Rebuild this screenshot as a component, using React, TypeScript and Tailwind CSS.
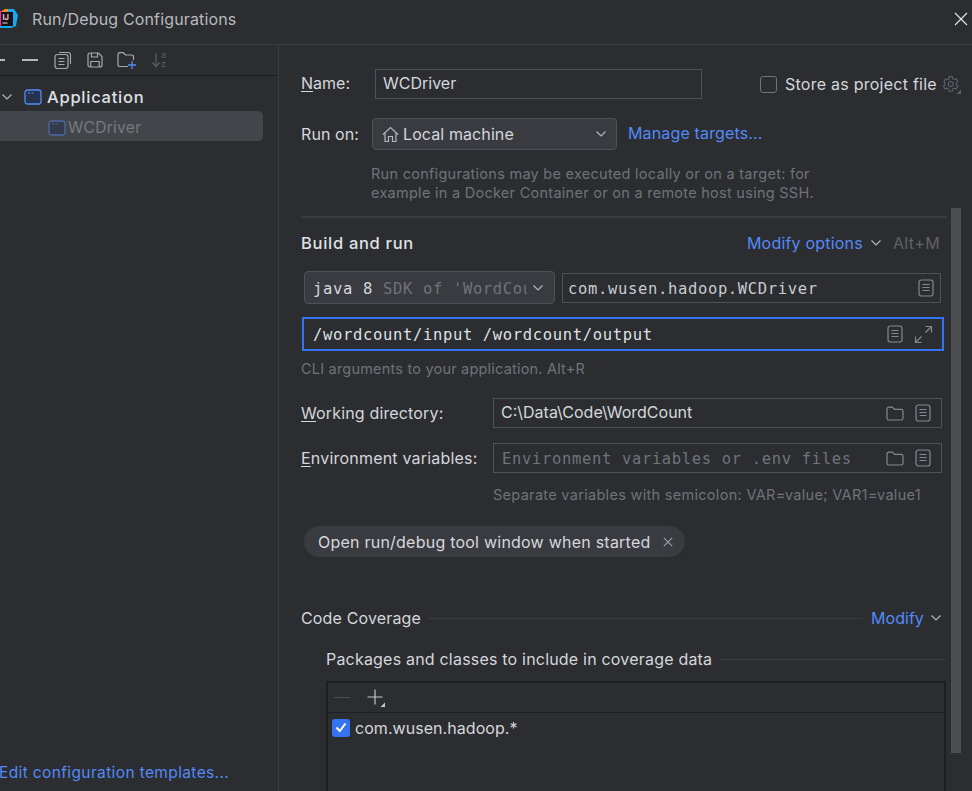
import React from "react";

const Chevron = ({ className = "" }: { className?: string }) => (
  <svg width="12" height="8" viewBox="0 0 12 8" fill="none" className={className}>
    <path d="M1.5 1.5 6 6l4.5-4.5" stroke="#b4b6bb" strokeWidth="1.2" />
  </svg>
);
const Doc = () => (
  <svg width="16" height="18" viewBox="0 0 16 18" fill="none">
    <rect x="1" y="1" width="14" height="16" rx="2.5" stroke="#85888e" strokeWidth="1.2" />
    <path d="M4.5 5.5h7M4.5 8.5h7M4.5 11.5h7" stroke="#85888e" strokeWidth="1.2" />
  </svg>
);
const Folder = () => (
  <svg width="18" height="15" viewBox="0 0 18 15" fill="none">
    <path d="M1 3a1.8 1.8 0 0 1 1.8-1.8h3.6L8.6 3.4h6.6A1.8 1.8 0 0 1 17 5.2v7A1.8 1.8 0 0 1 15.2 14H2.8A1.8 1.8 0 0 1 1 12.2z" stroke="#85888e" strokeWidth="1.2" />
  </svg>
);
const AppIcon = ({ dim = false }: { dim?: boolean }) => (
  <svg width="18" height="16" viewBox="0 0 18 16" fill="none" className={dim ? "opacity-50" : ""}>
    <rect x="1" y="1" width="16" height="14" rx="2.5" fill="#25324d" stroke="#548af7" strokeWidth="1.3" />
    <path d="M4 4h2M7.5 4h2" stroke="#548af7" strokeWidth="1.2" />
  </svg>
);

const Underlined = ({ first, rest }: { first: string; rest: string }) => (
  <span>
    <span className="underline underline-offset-2">{first}</span>
    {rest}
  </span>
);

export default function App() {
  return (
    <div className="flex h-[791px] w-[972px] flex-col overflow-hidden bg-[#2b2d30] font-['Inter',sans-serif] text-[16px] text-[#d5d7dc]">
      {/* Title bar */}
      <div className="flex h-[45px] shrink-0 items-center border-b border-[#393b40] pb-[7px]">
        <svg width="18" height="20" viewBox="0 0 18 20">
          <path d="M0 3 5 0h4l-1 4H0z" fill="#ff8a1f" />
          <path d="M0 2h2v15H0z" fill="#fc2f8e" />
          <path d="M8 0h6l4 6-2 11-5 2H0v-2h13V3H8z" fill="#16a9ee" />
          <rect x="1" y="3" width="12" height="14" fill="#17131a" />
          <rect x="2.5" y="13.5" width="5" height="1" fill="#e8e8e8" />
          <text x="2.5" y="10.5" fontSize="7.5" fontWeight="700" fill="#f6c9d0" fontFamily="Inter">IJ</text>
        </svg>
        <span className="ml-[14px] text-[16px] tracking-[0.15px] text-[#b8babf]">Run/Debug Configurations</span>
        <svg width="14" height="14" viewBox="0 0 14 14" className="ml-auto mr-[4px]">
          <path d="M1 1l12 12M13 1 1 13" stroke="#e8e9ec" strokeWidth="1.1" />
        </svg>
      </div>

      <div className="flex min-h-0 flex-1">
        {/* Left panel */}
        <div className="flex w-[279px] shrink-0 flex-col border-r border-r-[#393b40]">
          <div className="flex h-[31px] shrink-0 items-center border-b border-[#1e1f22]">
            <div className="h-[1.5px] w-[5px] bg-[#b4b6bb]" />
            <div className="ml-[17px] h-[1.5px] w-[16px] bg-[#b4b6bb]" />
            <svg width="18" height="18" viewBox="0 0 18 18" fill="none" className="ml-[16px]">
              <path d="M5 1.5h9a2.5 2.5 0 0 1 2.5 2.5v9" stroke="#a8aab0" strokeWidth="1.1" />
              <rect x="1" y="3.5" width="13" height="14" rx="2.5" stroke="#a8aab0" strokeWidth="1.2" />
              <path d="M4.5 7.5h6M4.5 10.5h6M4.5 13.5h6" stroke="#a8aab0" strokeWidth="1.1" />
            </svg>
            <svg width="16" height="16" viewBox="0 0 16 16" fill="none" className="ml-[15px]">
              <path d="M1 3a2 2 0 0 1 2-2h8.5L15 4.5V13a2 2 0 0 1-2 2H3a2 2 0 0 1-2-2z" stroke="#a8aab0" strokeWidth="1.2" />
              <path d="M4.5 1v4h6V1M3.8 15V9.5h8.4V15" stroke="#a8aab0" strokeWidth="1.2" />
            </svg>
            <svg width="20" height="18" viewBox="0 0 20 18" fill="none" className="ml-[14px]">
              <path d="M11 15.5H2.8A1.8 1.8 0 0 1 1 13.7V3.5a1.8 1.8 0 0 1 1.8-1.8h3.4L8.6 4h6.1a1.8 1.8 0 0 1 1.8 1.8V9" stroke="#a8aab0" strokeWidth="1.2" />
              <path d="M15 10v8M11 14h8" stroke="#548af7" strokeWidth="1.3" />
            </svg>
            <svg width="18" height="18" viewBox="0 0 18 18" fill="none" className="ml-[14px] overflow-visible">
              <path d="M5 2v13.5M1.5 11.5 5 15.5l3.5-4" stroke="#5a5d63" strokeWidth="1.2" />
              <text x="10" y="7" fontSize="9" fill="#5a5d63" fontFamily="Inter">a</text>
              <text x="10" y="16" fontSize="9" fill="#5a5d63" fontFamily="Inter">z</text>
            </svg>
          </div>
          <div className="flex h-[35px] shrink-0 items-center pt-[7px]">
            <Chevron className="ml-[1px]" />
            <div className="ml-[11px]"><AppIcon /></div>
            <span className="ml-[5px] text-[16.5px] font-medium tracking-[0.75px] text-[#dfe1e5]">Application</span>
          </div>
          <div className="flex h-[30px] w-[263px] shrink-0 items-center rounded-r-[5px] bg-[#43454a] pt-[3px]">
            <div className="ml-[48px]"><AppIcon dim /></div>
            <span className="ml-[2px] text-[15.5px] tracking-[0.3px] text-[#777a80]">WCDriver</span>
          </div>
          <div className="mt-auto pb-[7px] text-[15.5px] tracking-[0.37px] text-[#548af7]">
            <div className="ml-[-1px]">Edit configuration templates...</div>
          </div>
        </div>

        {/* Right panel */}
        <div className="relative min-w-0 flex-1 pl-[22px]">
          <div className="mt-[24px] flex h-[30px] items-center">
            <span className="w-[74px] pb-[2px]"><Underlined first="N" rest="ame:" /></span>
            <div className="flex h-[30px] w-[327px] items-center border border-[#4e5157] pb-[2px] pl-[7px] text-[16px]">WCDriver</div>
            <div className="ml-[58px] h-[17px] w-[17px] rounded-[3px] border-[1.5px] border-[#6f737a]" />
            <span className="ml-[8px] tracking-[0.25px]">Store as project file</span>
            <svg width="19" height="19" viewBox="0 0 19 19" fill="none" className="ml-[5px]">
              <path d="M7.2 1.5h3l.5 2.1 1.7.9 2-.7 1.5 2.6-1.5 1.5v1.9l1.5 1.4-1.5 2.6-2-.6-1.7.9-.5 2.1h-3l-.5-2.1-1.7-.9-2 .6-1.5-2.6 1.5-1.4V7.9L2 6.4l1.5-2.6 2 .7 1.7-.9z" stroke="#5f6268" strokeWidth="1.1" />
              <circle cx="8.7" cy="8.9" r="2.4" stroke="#5f6268" strokeWidth="1.1" />
              <path d="M19 14.5V19h-4.5z" fill="#5f6268" />
            </svg>
          </div>

          <div className="mt-[19px] flex h-[32px] items-center">
            <span className="w-[71px] tracking-[0.1px]">Run on:</span>
            <div className="flex h-[32px] w-[245px] items-center rounded-[4px] border border-[#4e5157] bg-[#393b40] pl-[9px]">
              <svg width="17" height="17" viewBox="0 0 17 17" fill="none">
                <path d="M1 8.5 8.5 1.5 16 8.5M3 7v8.5h3.5V10.5h4v5H14V7" stroke="#b4b6bb" strokeWidth="1.2" />
              </svg>
              <span className="ml-[4px] tracking-[0.1px]">Local machine</span>
              <Chevron className="ml-auto mr-[9px]" />
            </div>
            <span className="ml-[11px] pb-[2px] tracking-[0.15px] text-[#548af7]">Manage targets...</span>
          </div>

          <div className="ml-[70px] mt-[14px] text-[14.5px] leading-[19px] tracking-[0.27px] text-[#6f737a]">
            <div>Run configurations may be executed locally or on a target: for</div>
            <div>example in a Docker Container or on a remote host using SSH.</div>
          </div>

          <div className="mr-[25px] mt-[14px] h-[2px] bg-[#393b40]" />

          <div className="mt-[15px] flex h-[20px] items-center pr-[32px]">
            <span className="text-[16.5px] font-medium tracking-[0.7px] text-[#dfe1e5]">Build and run</span>
            <span className="ml-auto tracking-[0.2px] text-[#548af7]">Modify options</span>
            <Chevron className="ml-[7px]" />
            <span className="ml-[11px] tracking-[0.4px] text-[#5f6268]">Alt+M</span>
          </div>

          <div className="ml-[3px] mt-[18px] flex h-[33px] items-center font-['DejaVu_Sans_Mono',monospace] text-[15.5px]">
            <div className="flex h-[33px] w-[251px] items-center overflow-hidden rounded-[4px] border border-[#4e5157] bg-[#393b40] pl-[8px]">
              <span className="w-[214px] overflow-hidden whitespace-nowrap pt-[4px] tracking-[0.66px]">java 8 <span className="text-[#6f737a]">SDK of 'WordCount'</span></span>
              <Chevron className="ml-[5px]" />
            </div>
            <div className="ml-[7px] flex h-[30px] w-[379px] items-center border border-[#4e5157] pl-[5px] pr-[6px] tracking-[0.66px] text-[#c9cbd0]">
              <span className="pt-[4px]">com.wusen.hadoop.WCDriver</span>
              <span className="ml-auto font-sans"><Doc /></span>
            </div>
          </div>

          <div className="ml-[1px] mt-[13px] flex h-[34px] w-[642px] items-center border-2 border-[#3574f0] pl-[9px] pr-[9px] font-['DejaVu_Sans_Mono',monospace] text-[15.5px] tracking-[0.66px] text-[#dfe1e5]">
            <span className="pt-[3px]">/wordcount/input /wordcount/output</span>
            <span className="ml-auto"><Doc /></span>
            <svg width="19" height="19" viewBox="0 0 19 19" fill="none" className="ml-[11px]">
              <path d="M11.5 1.5h6v6M17.5 1.5l-6 6M7.5 17.5h-6v-6M1.5 17.5l6-6" stroke="#85888e" strokeWidth="1.2" />
            </svg>
          </div>

          <div className="mt-[9px] h-[18px] text-[14.5px] leading-[18px] tracking-[0.2px] text-[#6f737a]">CLI arguments to your application. Alt+R</div>

          <div className="mt-[20px] flex h-[30px] items-center">
            <span className="w-[192px] tracking-[0.15px]"><Underlined first="W" rest="orking directory:" /></span>
            <div className="flex h-[30px] w-[449px] items-center border border-[#4e5157] pl-[7px] pr-[10px]">
              <span className="pb-[2px]">C:\Data\Code\WordCount</span>
              <span className="ml-auto"><Folder /></span>
              <span className="ml-[11px]"><Doc /></span>
            </div>
          </div>

          <div className="mt-[15px] flex h-[30px] items-center">
            <span className="w-[192px] tracking-[0.2px]"><Underlined first="E" rest="nvironment variables:" /></span>
            <div className="flex h-[30px] w-[449px] items-center border border-[#4e5157] pl-[8px] pr-[10px] font-['DejaVu_Sans_Mono',monospace] text-[15.5px] tracking-[0.66px] text-[#6f737a]">
              <span className="pt-[3px]">Environment variables or .env files</span>
              <span className="ml-auto"><Folder /></span>
              <span className="ml-[11px]"><Doc /></span>
            </div>
          </div>

          <div className="ml-[192px] mt-[13px] h-[18px] text-[14.5px] leading-[18px] tracking-[0.3px] text-[#6f737a]">Separate variables with semicolon: VAR=value; VAR1=value1</div>

          <div className="ml-[3px] mt-[22px] flex h-[31px] w-[381px] items-center rounded-full bg-[#393b40] pl-[14px]">
            <span className="tracking-[0.23px]">Open run/debug tool window when started</span>
            <svg width="10" height="10" viewBox="0 0 10 10" className="ml-[12px]">
              <path d="M.8.8l8.4 8.4M9.2.8.8 9.2" stroke="#a0a2a8" strokeWidth="1.1" />
            </svg>
          </div>

          <div className="mt-[51px] flex h-[20px] items-center">
            <span className="tracking-[0.15px]">Code Coverage</span>
            <div className="ml-[7px] h-px w-[434px] bg-[#393b40]" />
            <span className="ml-[9px] tracking-[0.05px] text-[#548af7]">Modify</span>
            <Chevron className="ml-[6px]" />
          </div>

          <div className="ml-[25px] mr-[26px] mt-[21px] flex h-[20px] items-center">
            <span className="tracking-[0.2px]">Packages and classes to include in coverage data</span>
            <div className="ml-[8px] h-px flex-1 bg-[#393b40]" />
          </div>

          <div className="ml-[25px] mr-[26px] mt-[12px] h-[200px] border-2 border-b-0 border-[#1e1f22]">
            <div className="flex h-[30px] items-center border-b border-[#1e1f22]">
              <div className="ml-[6px] h-[1.5px] w-[16px] bg-[#4e5157]" />
              <svg width="20" height="20" viewBox="0 0 20 20" fill="none" className="ml-[16px]">
                <path d="M9 1.5v15M1.5 9h15" stroke="#c4c6cb" strokeWidth="1.2" />
                <path d="M19 14.5v4.5h-4.5z" fill="#c4c6cb" />
              </svg>
            </div>
            <div className="flex h-[29px] items-center pl-[4px]">
              <div className="flex h-[18px] w-[18px] items-center justify-center rounded-[3px] bg-[#3574f0]">
                <svg width="12" height="11" viewBox="0 0 12 11" fill="none">
                  <path d="M1.5 5.5 4.8 9 10.5 1.5" stroke="#fff" strokeWidth="2" />
                </svg>
              </div>
              <span className="ml-[5px] tracking-[0.05px]">com.wusen.hadoop.*</span>
            </div>
          </div>

          {/* Overlay scrollbar */}
          <div className="absolute right-[11px] top-[163px] h-[545px] w-[10px] bg-[#4d4e51]" />
        </div>
      </div>
    </div>
  );
}
